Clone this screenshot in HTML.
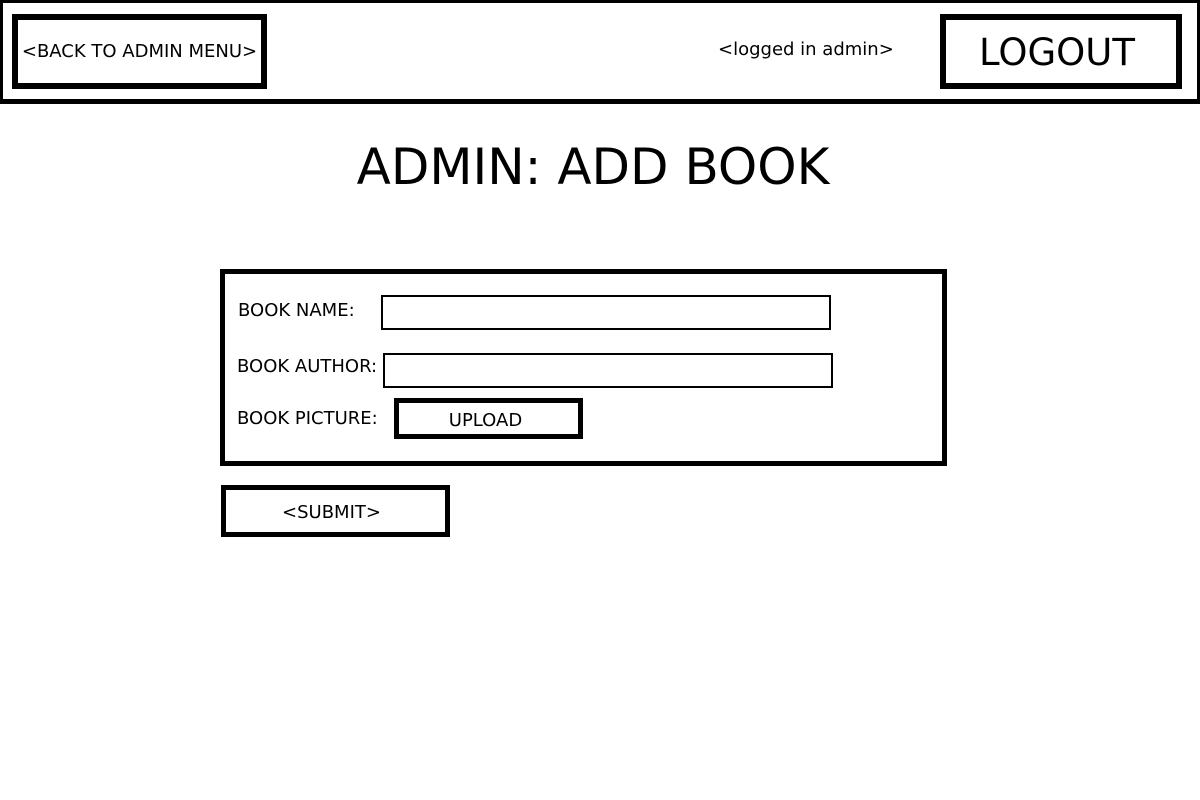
<!DOCTYPE html>
<html><head><style>
body{margin:0;width:1200px;height:800px;background:#fff;position:relative;overflow:hidden;font-family:"DejaVu Sans","Liberation Sans",sans-serif;color:#000}
div{position:absolute;box-sizing:border-box}
.b{border:solid #000}
.t{white-space:nowrap}
</style></head><body>
<div class="b" style="left:0;top:0;width:1200px;height:104px;border-width:3px 3px 5px 3px"></div>
<div class="b" style="left:12px;top:14px;width:255px;height:75px;border-width:6px;display:flex;align-items:center;justify-content:center;font-size:18px">&lt;BACK TO ADMIN MENU&gt;</div>
<div class="t" style="left:718px;top:39px;font-size:18px">&lt;logged in admin&gt;</div>
<div class="b" style="left:940px;top:14px;width:242px;height:75px;border-width:6px;display:flex;align-items:center;justify-content:center;font-size:37px;padding-top:2px;padding-right:8px">LOGOUT</div>
<div class="t" style="left:0;width:1186px;top:138px;text-align:center;font-size:50px">ADMIN: ADD BOOK</div>
<div class="b" style="left:220px;top:269px;width:727px;height:197px;border-width:5px"></div>
<div class="t" style="left:238px;top:300px;font-size:18px">BOOK NAME:</div>
<div class="b" style="left:381px;top:295px;width:450px;height:35px;border-width:2.5px"></div>
<div class="t" style="left:237px;top:356px;font-size:18px">BOOK AUTHOR:</div>
<div class="b" style="left:383px;top:353px;width:450px;height:35px;border-width:2.5px"></div>
<div class="t" style="left:237px;top:408px;font-size:18px">BOOK PICTURE:</div>
<div class="b" style="left:394px;top:398px;width:189px;height:41px;border-width:5px;display:flex;align-items:center;justify-content:center;font-size:18px;padding-top:3px;padding-right:6px">UPLOAD</div>
<div class="b" style="left:221px;top:485px;width:229px;height:52px;border-width:5px;display:flex;align-items:center;justify-content:center;font-size:18px;padding-top:2px;padding-right:8px">&lt;SUBMIT&gt;</div>
</body></html>
